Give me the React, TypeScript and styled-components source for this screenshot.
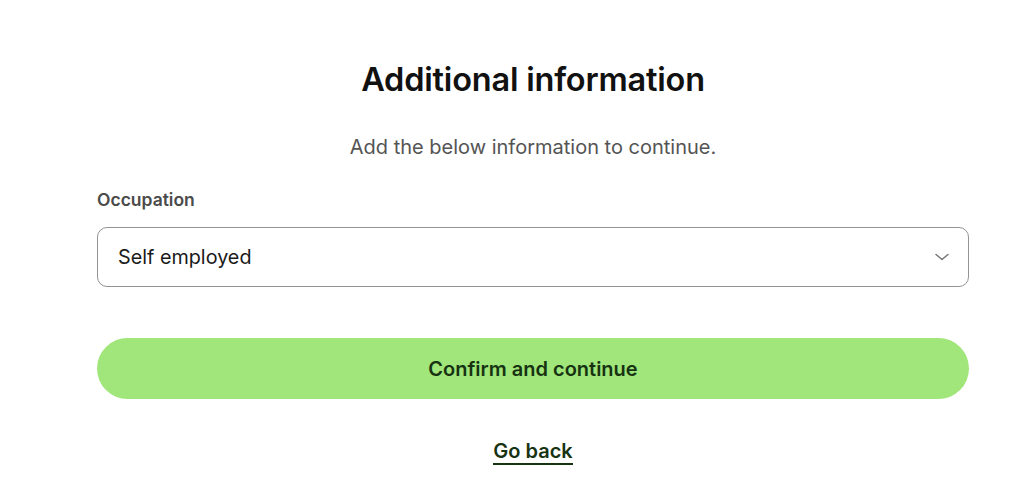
import styled, { createGlobalStyle } from 'styled-components'

const GlobalStyle = createGlobalStyle`
  html, body {
    margin: 0;
    padding: 0;
    background: #ffffff;
    font-family: Inter, 'Noto Sans', sans-serif;
  }
`

const Page = styled.main`
  width: 872px;
  padding: 57px 0 0 97px;
  display: flex;
  flex-direction: column;
  align-items: stretch;
`

const Title = styled.h1`
  margin: 0;
  text-align: center;
  font-size: 32.5px;
  line-height: 46px;
  font-weight: 600;
  color: #111111;
  letter-spacing: -0.2px;
`

const Subtitle = styled.p`
  margin: 32px 0 0;
  text-align: center;
  font-size: 20px;
  line-height: 24px;
  color: #545454;
`

const Label = styled.label`
  margin-top: 31px;
  font-size: 17.5px;
  line-height: 20px;
  font-weight: 600;
  color: #4a4a4a;
`

const SelectBox = styled.div`
  margin-top: 17px;
  height: 60px;
  box-sizing: border-box;
  border: 1px solid #939393;
  border-radius: 10px;
  display: flex;
  align-items: center;
  justify-content: space-between;
  padding: 0 16px 0 20px;
  font-size: 19.8px;
  color: #1a1a1a;
`

const Chevron = styled.svg`
  width: 20px;
  height: 20px;
  color: #777777;
`

const PrimaryButton = styled.button`
  margin-top: 51px;
  height: 61px;
  border: none;
  border-radius: 31px;
  background: #a0e67a;
  font-family: inherit;
  font-size: 20px;
  font-weight: 600;
  color: #173312;
  cursor: pointer;
`

const LinkRow = styled.div`
  margin-top: 40px;
  display: flex;
  justify-content: center;
`

const BackLink = styled.a`
  font-size: 20px;
  line-height: 24px;
  font-weight: 600;
  color: #173312;
  text-decoration: none;
  padding-bottom: 0;
  border-bottom: 2px solid #173312;
  cursor: pointer;
`

const App = () => {
  return (
    <>
      <GlobalStyle />
      <Page>
        <Title>Additional information</Title>
        <Subtitle>Add the below information to continue.</Subtitle>
        <Label>Occupation</Label>
        <SelectBox>
          <span>Self employed</span>
          <Chevron viewBox="0 0 20 20" fill="none">
            <path d="M4 7.5l6 5 6-5" stroke="currentColor" strokeWidth="1.5" strokeLinecap="round" strokeLinejoin="round" />
          </Chevron>
        </SelectBox>
        <PrimaryButton>Confirm and continue</PrimaryButton>
        <LinkRow>
          <BackLink href="#">Go back</BackLink>
        </LinkRow>
      </Page>
    </>
  )
}

export default App
